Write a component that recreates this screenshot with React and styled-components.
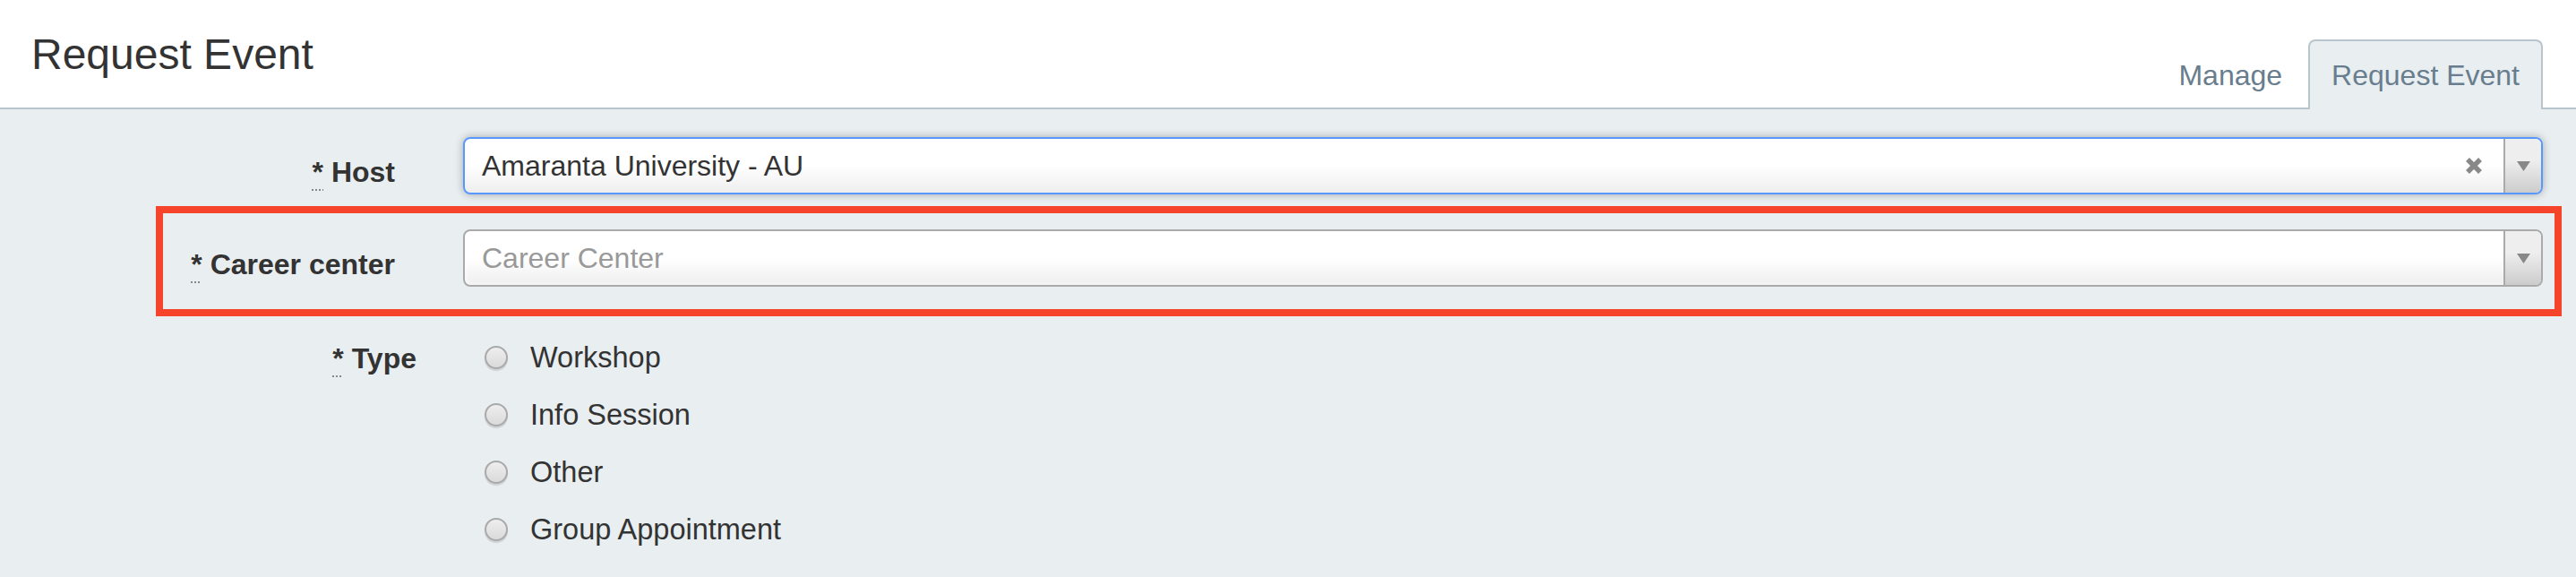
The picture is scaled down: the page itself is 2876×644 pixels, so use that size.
import React from "react";
import styled, { createGlobalStyle } from "styled-components";

const GlobalStyle = createGlobalStyle`
  html, body {
    margin: 0;
    padding: 0;
  }
  body {
    background: #e9eef1;
    font-family: "Liberation Sans", Arial, sans-serif;
    color: #333;
  }
`;

const Header = styled.header`
  display: flex;
  justify-content: space-between;
  align-items: flex-end;
  height: 120px;
  padding: 0 37px 0 35px;
  background: #fff;
  border-bottom: 2px solid #b9c5cd;
`;

const Title = styled.h1`
  align-self: flex-start;
  margin: 37px 0 0;
  font-size: 48px;
  line-height: 48px;
  font-weight: 300;
  color: #333;
`;

const Tabs = styled.nav`
  display: flex;
  gap: 3px;
  margin-bottom: -2px;
`;

const Tab = styled.a`
  padding: 20px 24px;
  font-size: 32px;
  line-height: 36px;
  color: #687d8d;
  text-decoration: none;
  border: 2px solid ${(p) => (p.$active ? "#b9c5cd" : "transparent")};
  border-bottom: 0;
  border-radius: 8px 8px 0 0;
  background: ${(p) => (p.$active ? "#e9eef1" : "transparent")};
`;

const Form = styled.form`
  display: flex;
  flex-direction: column;
  padding: 31px 37px 0 0;
`;

const Row = styled.div`
  position: relative;
  display: grid;
  grid-template-columns: 441px 1fr;
  column-gap: 76px;
  padding-left: ${(p) => p.$indent || 0}px;
  margin-top: ${(p) => p.$space || 0}px;
`;

const Label = styled.label`
  box-sizing: border-box;
  height: 64px;
  padding-top: ${(p) => p.$drop}px;
  text-align: right;
  white-space: nowrap;
  font-size: 32px;
  font-weight: 700;
  line-height: 64px;
  color: #333;
`;

const Req = styled.abbr`
  text-decoration: underline dotted #888;
  text-decoration-thickness: 2px;
  text-underline-offset: 8px;
`;

const Select = styled.div`
  display: flex;
  align-items: center;
  box-sizing: border-box;
  height: 64px;
  overflow: hidden;
  border: 2px solid ${(p) => (p.$focused ? "#5897fb" : "#aaa")};
  border-radius: 8px;
  background: linear-gradient(to top, #eee 0%, #fff 50%);
  box-shadow: ${(p) =>
    p.$focused ? "0 0 10px rgba(0, 0, 0, 0.3)" : "0 0 6px #fff inset"};
  font-size: 32px;
  color: ${(p) => (p.$placeholder ? "#999" : "#333")};
`;

const Value = styled.span`
  flex: 1;
  padding-left: 19px;
  white-space: nowrap;
`;

const Clear = styled.span`
  display: flex;
  width: 20px;
  height: 20px;
  margin-right: 23px;
`;

const Arrow = styled.span`
  align-self: stretch;
  display: flex;
  align-items: center;
  justify-content: center;
  width: 40px;
  border-left: 2px solid #aaa;
  background: linear-gradient(to top, #ccc 0%, #eee 60%);
`;

const Highlight = styled.div`
  position: absolute;
  top: -26px;
  bottom: -33px;
  left: 174px;
  right: -21px;
  border: 8px solid #f5442a;
  pointer-events: none;
`;

const Options = styled.div`
  display: flex;
  flex-direction: column;
`;

const Option = styled.label`
  display: flex;
  align-items: center;
  gap: 25px;
  height: 64px;
  font-size: 32.5px;
  color: #333;
`;

const RadioDot = styled.span`
  box-sizing: border-box;
  flex-shrink: 0;
  width: 26px;
  height: 26px;
  border-radius: 50%;
  border: 2px solid #a9a9a9;
  background: linear-gradient(#eeeeee, #dadada);
  box-shadow: 0 2px 1px rgba(0, 0, 0, 0.12);
`;

function ClearIcon() {
  return (
    <svg width="20" height="20" viewBox="0 0 20 20">
      <path d="M3 3 L17 17 M17 3 L3 17" stroke="#888" strokeWidth="5.5" />
    </svg>
  );
}

function ArrowIcon() {
  return (
    <svg width="15" height="11" viewBox="0 0 15 11">
      <path d="M0 0 H15 L7.5 11 Z" fill="#888" />
    </svg>
  );
}

function Chosen({ value, placeholder, focused, clearable }) {
  return (
    <Select $focused={focused} $placeholder={!value}>
      <Value>{value || placeholder}</Value>
      {clearable && (
        <Clear>
          <ClearIcon />
        </Clear>
      )}
      <Arrow>
        <ArrowIcon />
      </Arrow>
    </Select>
  );
}

const types = ["Workshop", "Info Session", "Other", "Group Appointment"];

export default function App() {
  return (
    <>
      <GlobalStyle />
      <Header>
        <Title>Request Event</Title>
        <Tabs>
          <Tab href="#">Manage</Tab>
          <Tab href="#" $active>
            Request Event
          </Tab>
        </Tabs>
      </Header>
      <Form>
        <Row>
          <Label $drop={7}>
            <Req title="required">*</Req> Host
          </Label>
          <Chosen value="Amaranta University - AU" focused clearable />
        </Row>
        <Row $space={39}>
          <Label $drop={7}>
            <Req title="required">*</Req> Career center
          </Label>
          <Chosen placeholder="Career Center" />
          <Highlight />
        </Row>
        <Row $space={47} $indent={24}>
          <Label $drop={1}>
            <Req title="required">*</Req> Type
          </Label>
          <Options>
            {types.map((t) => (
              <Option key={t}>
                <RadioDot />
                {t}
              </Option>
            ))}
          </Options>
        </Row>
      </Form>
    </>
  );
}
